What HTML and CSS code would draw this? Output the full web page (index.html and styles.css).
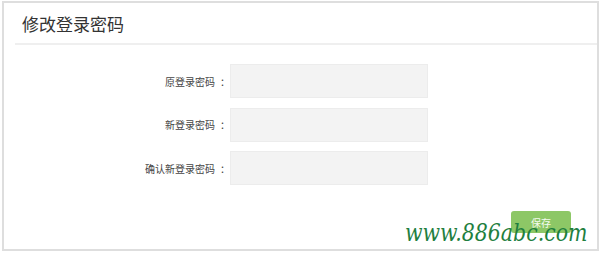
FILE: index.html
```html
<!DOCTYPE html>
<html lang="zh">
<head>
<meta charset="utf-8">
<title>修改登录密码</title>
<link rel="stylesheet" href="styles.css">
</head>
<body>
<div class="panel">
  <div class="panel-head">
    <h1 class="panel-title">修改登录密码</h1>
  </div>
  <form class="form">
    <div class="row">
      <label class="label">原登录密码<span class="colon">：</span></label>
      <input class="field" type="password">
    </div>
    <div class="row">
      <label class="label">新登录密码<span class="colon">：</span></label>
      <input class="field" type="password">
    </div>
    <div class="row">
      <label class="label">确认新登录密码<span class="colon">：</span></label>
      <input class="field" type="password">
    </div>
    <div class="actions">
      <button type="button" class="btn-save">保存</button>
    </div>
  </form>
  <div class="watermark">www.886abc.com</div>
</div>
</body>
</html>
```
FILE: styles.css
```css
html, body {
  margin: 0;
  padding: 0;
  background: #ffffff;
}
body {
  font-family: "Noto Sans CJK SC", "Noto Sans", sans-serif;
  color: #333;
}
.panel {
  position: relative;
  box-sizing: border-box;
  width: 597px;
  height: 250px;
  margin: 1px 0 0 2px;
  border: 2px solid #dedede;
  background: #fff;
  overflow: hidden;
}
.panel-head {
  margin-left: 11px;
  height: 40px;
  border-bottom: 2px solid #efefef;
  display: flex;
  align-items: center;
  padding-left: 7px;
}
.panel-title {
  margin: 0;
  font-size: 17px;
  font-weight: normal;
  color: #333;
  line-height: 1;
  padding-top: 1px;
}
.form {
  margin: 19px 0 0 0;
}
.row {
  display: flex;
  align-items: center;
  height: 34px;
  margin-bottom: 9.5px;
}
.label {
  box-sizing: border-box;
  width: 226px;
  text-align: right;
  font-size: 10px;
  color: #444;
  padding-right: 0;
}
.colon {
  padding-left: 5px;
}
.field {
  box-sizing: border-box;
  width: 198px;
  height: 34px;
  margin: 0;
  border: 1px solid #ececec;
  background: #f3f3f3;
  outline: none;
}
.actions {
  display: flex;
  justify-content: flex-end;
  padding-right: 26px;
  margin-top: 26px;
}
.btn-save {
  width: 60px;
  height: 22px;
  border: none;
  border-radius: 3px;
  background: #8dc766;
  color: #f4fbef;
  font-family: "Noto Sans CJK SC", sans-serif;
  font-size: 10px;
  padding: 0;
}
.watermark {
  position: absolute;
  left: 401px;
  top: 220px;
  font-family: "DejaVu Serif", serif;
  font-style: italic;
  font-size: 20.5px;
  line-height: 24px;
  color: #1f7f3f;
  white-space: nowrap;
  transform: scaleY(1.15);
  transform-origin: left bottom;
}
```
